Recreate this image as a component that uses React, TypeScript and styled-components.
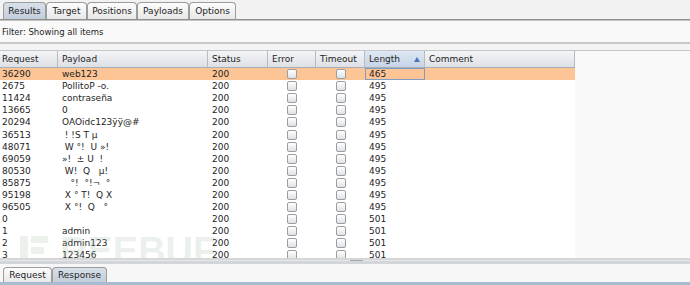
import { styled, createGlobalStyle } from 'styled-components';

const COLS = '58px 150px 60px 48px 49px 60px 150px';

const ROWS = [
  { id: '36290', payload: 'web123', length: '465' },
  { id: '2675', payload: 'PollitoP -o.', length: '495' },
  { id: '11424', payload: 'contraseña', length: '495' },
  { id: '13665', payload: '0', length: '495' },
  { id: '20294', payload: 'OAOidc123ÿÿ@#', length: '495' },
  { id: '36513', payload: ' ! !S T µ', length: '495' },
  { id: '48071', payload: ' W °!  U »!', length: '495' },
  { id: '69059', payload: '»!  ± U  !', length: '495' },
  { id: '80530', payload: ' W!  Q   µ!', length: '495' },
  { id: '85875', payload: '   °!  °!¬  °', length: '495' },
  { id: '95198', payload: ' X ° T!  Q X', length: '495' },
  { id: '96505', payload: ' X °!  Q   °', length: '495' },
  { id: '0', payload: '', length: '501' },
  { id: '1', payload: 'admin', length: '501' },
  { id: '2', payload: 'admin123', length: '501' },
  { id: '3', payload: '123456', length: '501' },
];

const TOP_TABS = [
  { label: 'Results', w: 43, active: true },
  { label: 'Target', w: 41 },
  { label: 'Positions', w: 50 },
  { label: 'Payloads', w: 52 },
  { label: 'Options', w: 47 },
];

const GlobalStyle = createGlobalStyle`
  html, body {
    margin: 0;
    padding: 0;
    background: #f7f7f7;
  }
  body {
    font-family: "DejaVu Sans", "Liberation Sans", Arial, sans-serif;
    font-size: 9px;
    color: #1e1e1e;
  }
`;

const App = () => {
  return (
    <>
      <GlobalStyle />
      <Window>
        <TabStrip>
          {TOP_TABS.map((t) => (
            <Tab key={t.label} $active={t.active} $w={t.w}>
              {t.label}
            </Tab>
          ))}
        </TabStrip>
        <FilterBar>Filter: Showing all items</FilterBar>
        <Gap />
        <TableArea>
          <Table>
            <HeaderRow>
              <HeaderCell $first>Request</HeaderCell>
              <HeaderCell>Payload</HeaderCell>
              <HeaderCell>Status</HeaderCell>
              <HeaderCell>Error</HeaderCell>
              <HeaderCell>Timeout</HeaderCell>
              <HeaderCell $sorted>
                Length
                <SortArrow />
              </HeaderCell>
              <HeaderCell>Comment</HeaderCell>
            </HeaderRow>
            {ROWS.map((r, i) => (
              <Row key={r.id} $selected={i === 0}>
                <Cell $first>{r.id}</Cell>
                <Cell>{r.payload}</Cell>
                <Cell>200</Cell>
                <CheckCell>
                  <Check />
                </CheckCell>
                <CheckCell>
                  <Check />
                </CheckCell>
                <Cell $focused={i === 0}>{r.length}</Cell>
                <Cell />
              </Row>
            ))}
          </Table>
          <Empty />
          <Watermark aria-hidden>
            <svg width="28" height="30" viewBox="0 0 28 30">
              <rect x="0" y="0" width="8" height="30" fill="currentColor" />
              <rect x="11" y="0" width="17" height="7" fill="currentColor" />
              <rect x="11" y="11" width="13" height="7" fill="currentColor" />
            </svg>
            <WatermarkText>REEBUF</WatermarkText>
          </Watermark>
        </TableArea>
        <Divider>
          <Grip />
        </Divider>
        <BottomStrip>
          <Tab $w={49} $small>
            Request
          </Tab>
          <Tab $w={55} $small $active>
            Response
          </Tab>
        </BottomStrip>
      </Window>
    </>
  );
};

export default App;

const Window = styled.div`
  width: 690px;
  height: 285px;
  overflow: hidden;
  display: flex;
  flex-direction: column;
  background: #f7f7f7;
`;

const TabStrip = styled.div`
  display: flex;
  align-items: flex-end;
  height: 19px;
  padding-left: 3px;
  background: #f2f2f2;
  border-bottom: 1px solid #8f8f8f;
  box-shadow: 0 1px 0 #c4c4c4;
`;

const Tab = styled.div<{ $active?: boolean; $w: number; $small?: boolean }>`
  box-sizing: border-box;
  width: ${(p) => p.$w}px;
  height: ${(p) => (p.$small ? 15 : 17)}px;
  display: flex;
  align-items: center;
  justify-content: center;
  border: 1px solid #9c9c9c;
  border-bottom: none;
  border-radius: 4px 4px 0 0;
  background: ${(p) =>
    p.$active
      ? 'linear-gradient(#d8e0ea, #c2cedb)'
      : 'linear-gradient(#fcfcfc, #e8e8e8)'};
  color: #1e1e1e;
  font-size: 9px;
  white-space: nowrap;
`;

const FilterBar = styled.div`
  height: 21px;
  margin-top: 1px;
  padding-left: 2px;
  display: flex;
  align-items: center;
  background: #f9f9f9;
  border-bottom: 2px solid #c8c8c8;
  font-size: 8.5px;
`;

const Gap = styled.div`
  height: 6px;
  background: #f4f4f4;
`;

const TableArea = styled.div`
  position: relative;
  height: 207px;
  display: flex;
  overflow: hidden;
  border-top: 1px solid #c3c6cb;
`;

const Table = styled.div`
  width: 575px;
  flex: none;
  background: #ffffff;
`;

const Empty = styled.div`
  flex: 1;
  background: #f9f9f9;
`;

const HeaderRow = styled.div`
  display: grid;
  grid-template-columns: ${COLS};
  height: 16px;
  border-bottom: 1px solid #a9aeb6;
`;

const HeaderCell = styled.div<{ $first?: boolean; $sorted?: boolean }>`
  display: flex;
  align-items: center;
  justify-content: space-between;
  padding: 0 4px 0 ${(p) => (p.$first ? 2 : 4)}px;
  border-right: 1px solid #b6bac1;
  background: ${(p) =>
    p.$sorted
      ? 'linear-gradient(#dfe8f3, #c6d4e6)'
      : 'linear-gradient(#f4f5f7, #dde0e5)'};
  white-space: nowrap;
`;

const SortArrow = styled.span`
  width: 0;
  height: 0;
  border-left: 3px solid transparent;
  border-right: 3px solid transparent;
  border-bottom: 5px solid #4676b8;
`;

const Row = styled.div<{ $selected?: boolean }>`
  display: grid;
  grid-template-columns: ${COLS};
  height: 12.1px;
  background: ${(p) => (p.$selected ? '#fdc596' : '#ffffff')};
`;

const Cell = styled.div<{ $first?: boolean; $focused?: boolean }>`
  display: flex;
  align-items: center;
  padding-left: ${(p) => (p.$first ? 2 : 4)}px;
  white-space: pre;
  overflow: hidden;
  line-height: 12px;
  box-shadow: ${(p) => (p.$focused ? 'inset 0 0 0 1px #7f9dc2' : 'none')};
`;

const CheckCell = styled.div`
  display: flex;
  align-items: center;
  justify-content: center;
`;

const Check = styled.span`
  box-sizing: border-box;
  width: 10px;
  height: 10px;
  border: 1px solid #9a9ea4;
  border-radius: 2px;
  background: linear-gradient(#ffffff, #dfe1e4);
`;

const Watermark = styled.div`
  position: absolute;
  left: 20px;
  top: 185px;
  display: flex;
  align-items: center;
  gap: 12px;
  color: rgba(170, 190, 170, 0.22);
  pointer-events: none;
`;

const WatermarkText = styled.span`
  font-family: "Liberation Sans", Arial, sans-serif;
  font-weight: bold;
  font-size: 38px;
  line-height: 30px;
`;

const Divider = styled.div`
  height: 6px;
  display: flex;
  justify-content: center;
  background: linear-gradient(#d6d6d8 0, #d6d6d8 2px, #e6e7e9 2px, #e6e7e9 3px, #d2d5da 3px);
`;

const Grip = styled.div`
  width: 13px;
  height: 1px;
  margin-top: 2px;
  margin-left: 22px;
  background: #a8abb0;
`;

const BottomStrip = styled.div`
  flex: 1;
  display: flex;
  align-items: flex-end;
  padding-left: 3px;
  background: #f7f7f7;
  border-bottom: 3px solid #a9bbd0;
`;
